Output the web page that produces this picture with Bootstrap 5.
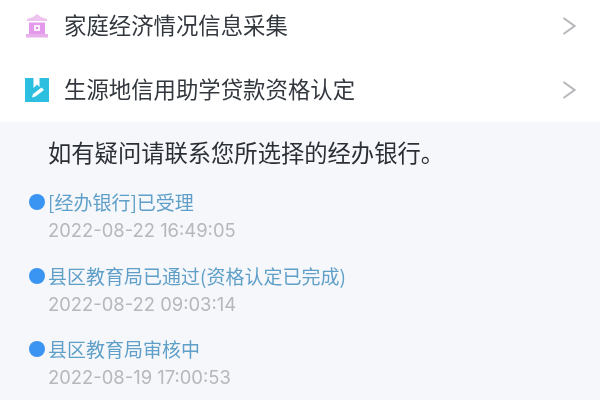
<!DOCTYPE html>
<html lang="zh">
<head>
<meta charset="utf-8">
<title>贷款</title>
<link href="https://cdn.jsdelivr.net/npm/bootstrap@5.3.0/dist/css/bootstrap.min.css" rel="stylesheet">
<style>
html,body{height:400px;overflow:hidden;background:#fff;}
body{font-family:"Noto Sans CJK SC","Liberation Sans",sans-serif;}
.screen{width:600px;height:400px;overflow:hidden;filter:blur(.55px);}
.menu-item{height:64px;padding-left:24px;padding-right:24px;}
.menu-top{height:52px;margin-bottom:6px;}
.menu-ico{width:26px;height:26px;margin-right:14px;flex:none;}
.menu-text{font-size:22.4px;color:#33383f;line-height:1;padding-bottom:3px;}
.info-panel{background:#f5f7fa;height:278px;padding-top:13px;}
.info-head{font-size:23.3px;line-height:34px;color:#2b2f35;padding-left:48px;margin-bottom:19px;}
.step{height:73.500px;padding-left:29px;}
.step-dot{width:16px;height:16px;border-radius:50%;background:#3a94f2;flex:none;margin-right:3px;}
.step-title{font-size:19px;line-height:28px;color:#5f9fc8;white-space:nowrap;}
.step-date{font-size:18.400px;line-height:28px;color:#b5b8bc;padding-left:19px;font-family:Inter,"Liberation Sans",sans-serif;}
</style>
</head>
<body>
<div class="screen">
  <div class="d-flex align-items-center menu-item menu-top">
    <svg class="menu-ico" viewBox="0 0 26 26"><path d="M13 1 L17 4 L23 6 L23 8 L3 8 L3 6 L9 4Z" fill="#eec4ee"/><rect x="5" y="9.500" width="16" height="12" fill="#e49aea"/><rect x="2" y="21" width="22" height="3.500" fill="#e7b0ea"/><rect x="10" y="12" width="6" height="6" fill="#fbeefb"/><rect x="12" y="14" width="2" height="2" fill="#dd8fe4"/></svg>
    <div class="menu-text flex-grow-1">家庭经济情况信息采集</div>
    <svg width="14" height="20" viewBox="0 0 14 20"><path d="M1.500 2 L12.500 10 L1.500 18" fill="none" stroke="#b5b7ba" stroke-width="2"/></svg>
  </div>
  <div class="d-flex align-items-center menu-item">
    <svg class="menu-ico" viewBox="0 0 26 26"><path d="M1 1 H9.500 V11 L13 7.500 L15.500 10 V1 H25 V25 H1Z" fill="#2cbfe0"/><path d="M8 20.500 L9 17 L17.500 10.500 L20 13 L11.500 19.500Z" fill="#fff"/></svg>
    <div class="menu-text flex-grow-1">生源地信用助学贷款资格认定</div>
    <svg width="14" height="20" viewBox="0 0 14 20"><path d="M1.500 2 L12.500 10 L1.500 18" fill="none" stroke="#b5b7ba" stroke-width="2"/></svg>
  </div>
  <div class="info-panel">
    <div class="info-head">如有疑问请联系您所选择的经办银行。</div>
    <div class="step">
      <div class="d-flex align-items-center"><span class="step-dot"></span><span class="step-title">[经办银行]已受理</span></div>
      <div class="step-date">2022-08-22 16:49:05</div>
    </div>
    <div class="step">
      <div class="d-flex align-items-center"><span class="step-dot"></span><span class="step-title">县区教育局已通过(资格认定已完成)</span></div>
      <div class="step-date">2022-08-22 09:03:14</div>
    </div>
    <div class="step">
      <div class="d-flex align-items-center"><span class="step-dot"></span><span class="step-title">县区教育局审核中</span></div>
      <div class="step-date">2022-08-19 17:00:53</div>
    </div>
  </div>
</div>
<script src="https://cdn.jsdelivr.net/npm/bootstrap@5.3.0/dist/js/bootstrap.bundle.min.js"></script>
</body>
</html>
